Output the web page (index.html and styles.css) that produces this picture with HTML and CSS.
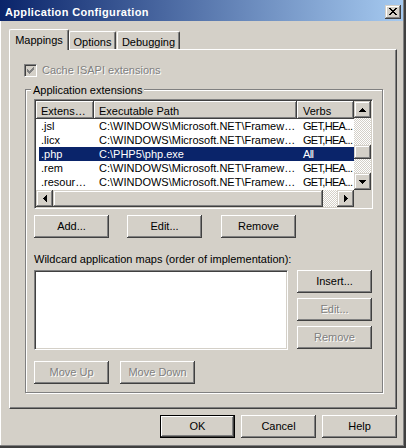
FILE: index.html
```html
<!DOCTYPE html>
<html>
<head>
<meta charset="utf-8">
<title>Application Configuration</title>
<link rel="stylesheet" href="styles.css">
</head>
<body>
<div class="window">
  <div class="titlebar">
    <span class="title">Application Configuration</span>
    <div class="close">
      <svg width="8" height="7" viewBox="0 0 8 7"><path d="M0 0h2v1h-2zM6 0h2v1h-2zM1 1h2v1h-2zM5 1h2v1h-2zM2 2h4v1h-4zM3 3h2v1h-2zM2 4h4v1h-4zM1 5h2v1h-2zM5 5h2v1h-2zM0 6h2v1h-2zM6 6h2v1h-2z" fill="#000"/></svg>
    </div>
  </div>
  <div class="client">
    <div class="tabs">
      <div class="tab active t-map">Mappings</div>
      <div class="tab t-opt">Options</div>
      <div class="tab t-dbg">Debugging</div>
    </div>
    <div class="panel">
      <div class="checkrow">
        <span class="checkbox">
          <svg width="7" height="7" viewBox="0 0 7 7"><path d="M6 0h1v3h-1zM5 1h1v3h-1zM4 2h1v3h-1zM3 3h1v3h-1zM2 4h1v3h-1zM1 3h1v3h-1zM0 2h1v3h-1z" fill="#808080"/></svg>
        </span>
        <span class="disabled-text">Cache ISAPI extensions</span>
      </div>
      <div class="group">
        <div class="group-label">Application extensions</div>
        <div class="listview">
          <div class="lv-main">
            <div class="lv-list">
              <div class="lv-head">
                <div class="hc c1">Extens…</div>
                <div class="hc c2">Executable Path</div>
                <div class="hc c3">Verbs</div>
              </div>
              <div class="lv-rows">
                <div class="lv-row"><div class="c1">.jsl</div><div class="c2">C:\WINDOWS\Microsoft.NET\Framew…</div><div class="c3">GET,HEA...</div></div>
                <div class="lv-row"><div class="c1">.licx</div><div class="c2">C:\WINDOWS\Microsoft.NET\Framew…</div><div class="c3">GET,HEA...</div></div>
                <div class="lv-row sel"><div class="c1">.php</div><div class="c2">C:\PHP5\php.exe</div><div class="c3">All</div></div>
                <div class="lv-row"><div class="c1">.rem</div><div class="c2">C:\WINDOWS\Microsoft.NET\Framew…</div><div class="c3">GET,HEA...</div></div>
                <div class="lv-row"><div class="c1">.resour…</div><div class="c2">C:\WINDOWS\Microsoft.NET\Framew…</div><div class="c3">GET,HEA...</div></div>
              </div>
            </div>
            <div class="vscroll">
              <div class="sb-btn"><svg width="7" height="4" viewBox="0 0 7 4"><path d="M3 0H4V1H5V2H6V3H7V4H0V3H1V2H2V1H3Z" fill="#000"/></svg></div>
              <div class="vtrack"><div class="vthumb"></div></div>
              <div class="sb-btn"><svg width="7" height="4" viewBox="0 0 7 4"><path d="M0 0H7V1H6V2H5V3H4V4H3V3H2V2H1V1H0Z" fill="#000"/></svg></div>
            </div>
          </div>
          <div class="lv-bottom">
            <div class="hscroll">
              <div class="sb-btn"><svg width="4" height="7" viewBox="0 0 4 7"><path d="M3 0H4V7H3V6H2V5H1V4H0V3H1V2H2V1H3Z" fill="#000"/></svg></div>
              <div class="hthumb"></div>
              <div class="htrack"></div>
              <div class="sb-btn"><svg width="4" height="7" viewBox="0 0 4 7"><path d="M0 0H1V1H2V2H3V3H4V4H3V5H2V6H1V7H0Z" fill="#000"/></svg></div>
            </div>
            <div class="corner"></div>
          </div>
        </div>
        <div class="btn-row">
          <div class="btn">Add...</div>
          <div class="btn gap18">Edit...</div>
          <div class="btn gap19">Remove</div>
        </div>
        <div class="wild-label">Wildcard application maps (order of implementation):</div>
        <div class="wild-row">
          <div class="listbox"></div>
          <div class="btn-col">
            <div class="btn">Insert...</div>
            <div class="btn disabled">Edit...</div>
            <div class="btn disabled">Remove</div>
          </div>
        </div>
        <div class="btn-row move-row">
          <div class="btn disabled">Move Up</div>
          <div class="btn disabled gap11">Move Down</div>
        </div>
      </div>
    </div>
    <div class="footer">
      <div class="btn default">OK</div>
      <div class="btn">Cancel</div>
      <div class="btn">Help</div>
    </div>
  </div>
</div>
</body>
</html>
```

FILE: styles.css
```css
* { box-sizing: border-box; }
html, body { margin: 0; padding: 0; }
body {
  width: 406px;
  height: 448px;
  overflow: hidden;
  background: #d4d0c8;
  font-family: "Liberation Sans", Arial, sans-serif;
  font-size: 11px;
  color: #000;
}
.window {
  width: 406px;
  height: 448px;
  background: #d4d0c8;
  box-shadow: inset -2px -2px #404040, inset -3px -3px #808080, inset 1px 0 #fff;
}
.titlebar {
  height: 21px;
  margin-right: 3px;
  display: flex;
  justify-content: space-between;
  align-items: flex-start;
  background: linear-gradient(to right, #0a246a, #a6caf0);
}
.title {
  color: #fff;
  font-weight: bold;
  padding: 6px 0 0 5px;
  line-height: 13px;
  letter-spacing: 0.35px;
  white-space: nowrap;
}
.close {
  width: 16px;
  height: 14px;
  margin: 5px 2px 0 0;
  padding: 3px 0 0 4px;
  background: #d4d0c8;
  box-shadow: inset -1px -1px #404040, inset 1px 1px #d4d0c8, inset -2px -2px #808080, inset 2px 2px #fff;
}
.close svg { display: block; }
.client { padding: 8px 0 0 9px; }
.tabs {
  display: flex;
  align-items: flex-end;
  height: 20px;
}
.tab {
  height: 18px;
  padding-top: 4px;
  line-height: 13px;
  text-align: center;
  white-space: nowrap;
  border-top: 1px solid #fff;
  border-left: 1px solid #fff;
  border-right: 1px solid #404040;
  box-shadow: inset -1px 0 #808080;
  border-radius: 2px 2px 0 0;
}
.tab.active {
  height: 21px;
  margin-bottom: -1px;
  position: relative;
  z-index: 1;
  background: #d4d0c8;
}
.t-map { width: 60px; }
.t-opt { width: 47px; }
.t-dbg { width: 63px; margin-left: 1px; }
.panel {
  width: 388px;
  height: 360px;
  border: 1px solid;
  border-color: #fff #404040 #404040 #fff;
  box-shadow: inset -1px -1px #808080;
  padding: 14px 0 0 14px;
}
.checkrow {
  display: flex;
  align-items: center;
  height: 13px;
  line-height: 13px;
}
.checkbox {
  width: 13px;
  height: 13px;
  padding: 2px;
  margin-right: 5px;
  border: 1px solid;
  border-color: #808080 #fff #fff #808080;
  box-shadow: inset 1px 1px #404040, inset -1px -1px #d4d0c8;
  background: #d4d0c8;
}
.checkbox svg { display: block; }
.disabled-text, .btn.disabled {
  color: #808080;
  text-shadow: 1px 1px 0 #fff;
}
.group {
  margin: 12px 0 0 1px;
  width: 358px;
  border: 1px solid #808080;
  box-shadow: inset 1px 1px #fff, 1px 1px #fff;
  padding: 0 9px 8px 8px;
}
.group-label {
  margin: -6px 0 0 -3px;
  padding: 0 2px;
  width: fit-content;
  background: #d4d0c8;
  line-height: 13px;
}
.listview, .listbox {
  border: 1px solid;
  border-color: #808080 #fff #fff #808080;
  box-shadow: inset 1px 1px #404040, inset -1px -1px #d4d0c8;
  background: #fff;
}
.listview {
  margin-top: 2px;
  width: 339px;
  height: 110px;
  padding: 1px;
}
.lv-main { display: flex; height: 89px; }
.lv-list { width: 318px; overflow: hidden; }
.lv-head {
  display: grid;
  grid-template-columns: 58px 203px 57px;
  height: 18px;
}
.hc {
  background: #d4d0c8;
  box-shadow: inset -1px -1px #404040, inset 1px 1px #fff, inset -2px -2px #808080;
  padding: 4px 0 0 5px;
  line-height: 13px;
  white-space: nowrap;
  overflow: hidden;
}
.hc.c3 { padding-left: 6px; }
.lv-row {
  display: grid;
  grid-template-columns: 55px 203px 57px;
  margin-left: 3px;
  height: 14px;
  line-height: 14px;
  white-space: nowrap;
}
.lv-row > div { overflow: hidden; }
.lv-row .c1 { padding-left: 2px; }
.lv-row .c2 { padding-left: 5px; }
.lv-row .c3 { padding-left: 6px; letter-spacing: -0.7px; }
.lv-row.sel { background: #0a246a; color: #fff; }
.vscroll {
  width: 17px;
  display: flex;
  flex-direction: column;
}
.sb-btn {
  width: 17px;
  height: 17px;
  flex: none;
  background: #d4d0c8;
  box-shadow: inset -1px -1px #404040, inset 1px 1px #d4d0c8, inset -2px -2px #808080, inset 2px 2px #fff;
  display: flex;
  align-items: center;
  justify-content: center;
}
.sb-btn svg { display: block; }
.vtrack, .htrack {
  background: repeating-conic-gradient(#fff 0 25%, #d4d0c8 0 50%) 0 0 / 2px 2px;
}
.vtrack { flex: 1; padding-top: 27px; }
.vthumb, .hthumb {
  background: #d4d0c8;
  box-shadow: inset -1px -1px #404040, inset 1px 1px #d4d0c8, inset -2px -2px #808080, inset 2px 2px #fff;
}
.vthumb { height: 14px; }
.lv-bottom { display: flex; height: 17px; }
.hscroll { width: 318px; display: flex; }
.hthumb { width: 270px; flex: none; }
.htrack { flex: 1; }
.corner { width: 17px; background: #d4d0c8; }
.btn-row { display: flex; margin-top: 6px; }
.btn {
  width: 75px;
  height: 23px;
  flex: none;
  line-height: 23px;
  text-align: center;
  white-space: nowrap;
  background: #d4d0c8;
  box-shadow: inset -1px -1px #404040, inset 1px 1px #fff, inset -2px -2px #808080;
}
.btn.default {
  box-shadow: inset 0 0 0 1px #000, inset -2px -2px #404040, inset 2px 2px #fff, inset -3px -3px #808080;
}
.gap18 { margin-left: 18px; }
.gap19 { margin-left: 19px; }
.gap11 { margin-left: 11px; }
.wild-label { margin-top: 15px; line-height: 13px; white-space: nowrap; }
.wild-row { display: flex; margin-top: 4px; }
.listbox { width: 254px; height: 80px; }
.btn-col {
  margin-left: 9px;
  display: flex;
  flex-direction: column;
  gap: 5px;
}
.move-row { margin-top: 11px; }
.footer {
  width: 388px;
  display: flex;
  justify-content: flex-end;
  gap: 6px;
  margin-top: 6px;
}
```
